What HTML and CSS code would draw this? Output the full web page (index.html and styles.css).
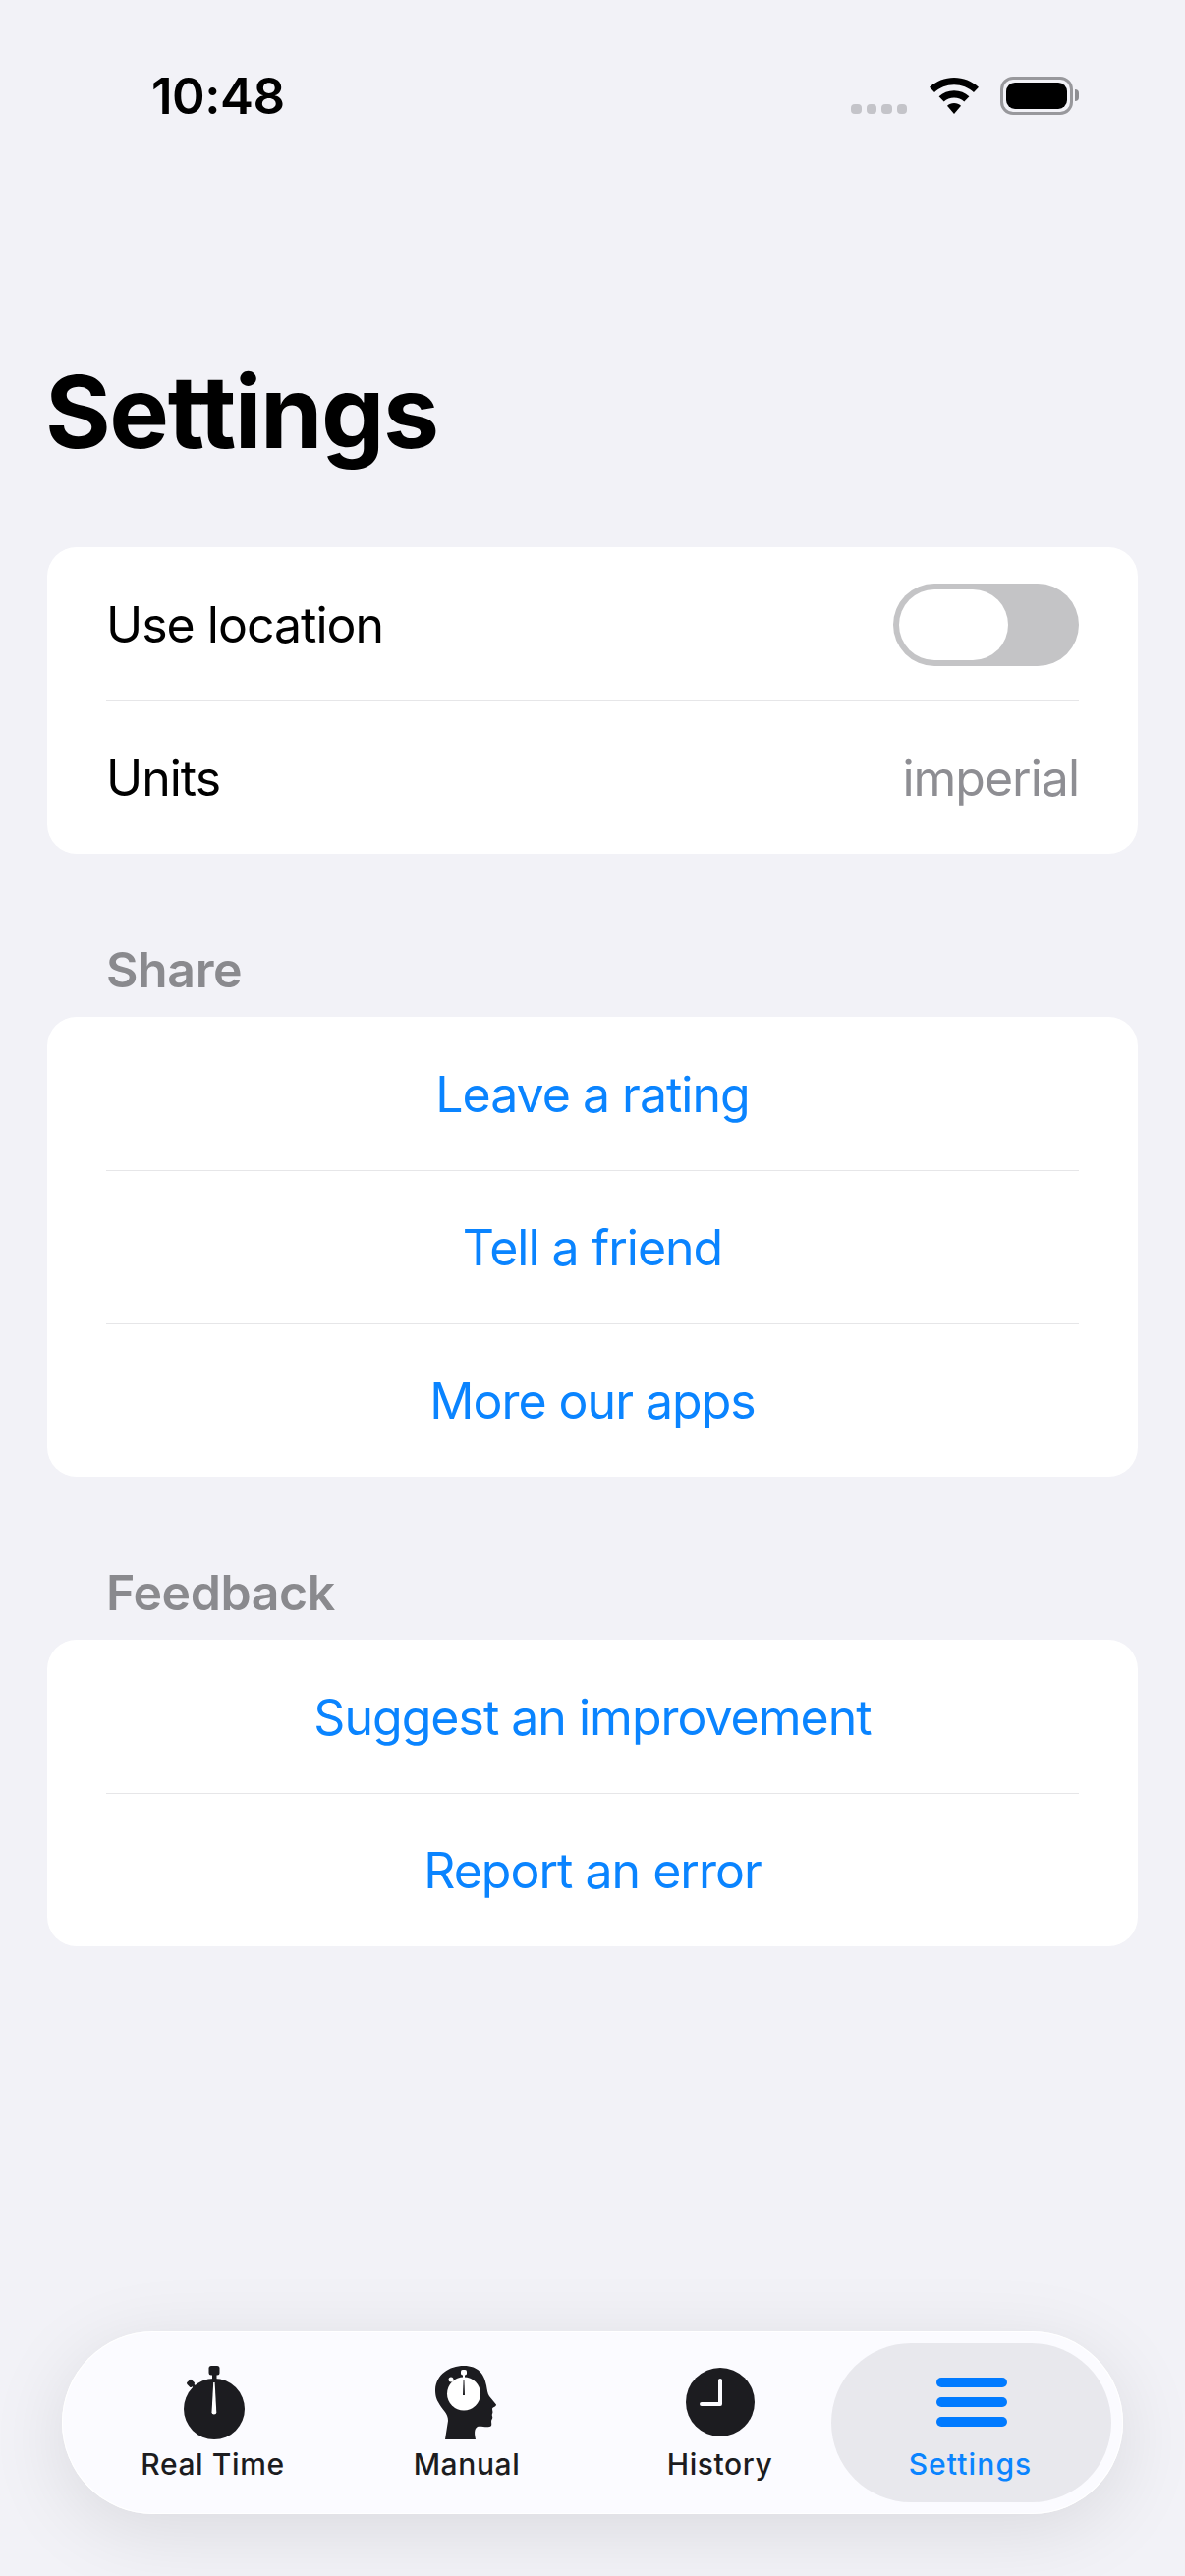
FILE: index.html
```html
<!DOCTYPE html>
<html lang="en">
<head>
<meta charset="utf-8">
<title>Settings</title>
<link rel="stylesheet" href="styles.css">
</head>
<body>
<div class="screen">
  <header class="status">
    <span class="time">10:48</span>
    <div class="status-icons">
      <div class="dots"><i></i><i></i><i></i><i></i></div>
      <svg class="wifi" width="50" height="37" viewBox="0 0 50 37"><path d="M25 0C34.500 0 43.200 3.600 50 9.800L45 15C39.700 10.100 32.700 7.200 25 7.200S10.300 10.100 5 15L0 9.800C6.800 3.600 15.500 0 25 0Z"/><path d="M25 13.200C30.900 13.200 36.300 15.400 40.400 19.200L35.300 24.400C32.600 21.900 29 20.400 25 20.400S17.400 21.900 14.700 24.400L9.600 19.200C13.700 15.400 19.100 13.200 25 13.200Z"/><path d="M25 26C27.700 26 30.200 27 32 28.800L25 37L18 28.800C19.800 27 22.300 26 25 26Z"/></svg>
      <div class="battery"><div class="battery-fill"></div></div>
    </div>
  </header>

  <h1 class="title">Settings</h1>

  <section class="card">
    <div class="row">
      <span>Use location</span>
      <span class="toggle"><span class="knob"></span></span>
    </div>
    <div class="row">
      <span>Units</span>
      <span class="value">imperial</span>
    </div>
  </section>

  <h2 class="section-label">Share</h2>
  <section class="card">
    <div class="row link">Leave a rating</div>
    <div class="row link">Tell a friend</div>
    <div class="row link">More our apps</div>
  </section>

  <h2 class="section-label">Feedback</h2>
  <section class="card">
    <div class="row link">Suggest an improvement</div>
    <div class="row link">Report an error</div>
  </section>

  <nav class="tabbar">
    <div class="tab tab-realtime">
      <svg class="tab-icon" width="66" height="75" viewBox="0 0 66 75">
        <rect x="28.500" y="0" width="11" height="9.500" rx="2.500" fill="#1c1c20"/>
        <rect x="32" y="9" width="4.500" height="6" fill="#1c1c20"/>
        <rect x="6.700" y="14.700" width="6.500" height="6.500" rx="1.500" transform="rotate(45 10 18)" fill="#1c1c20"/>
        <path d="M10 18L16 23" stroke="#1c1c20" stroke-width="3"/>
        <circle cx="34" cy="44" r="31" fill="#1c1c20"/>
        <path d="M33.200 17H34.600L36.300 47.500Q36.300 49.500 33.900 49.500T31.500 47.500Z" fill="#fff"/>
      </svg>
      <span class="tab-label">Real Time</span>
    </div>
    <div class="tab tab-manual">
      <svg class="tab-icon" width="64" height="75" viewBox="0 0 64 75">
        <path d="M29 0C44 0 50 9 52 20C53 25 53 28 55 31L62 39.500C62 42 58 42 58 44C58 46 59 47 58 49C57 50 59 52 58 54C56 56 58 59 57 61C54 64 47 61 43 62C39 64 40 70 41 75H10L13 56C13 48 7 45 3 37C0 32 0 27 0 24C1 9 14 0 29 0Z" fill="#1c1c20"/>
        <circle cx="29" cy="28.500" r="17" fill="#fff"/>
        <rect x="26" y="4" width="6" height="5.500" rx="1.800" fill="#fff"/>
        <rect x="28" y="9" width="2" height="4" fill="#fff"/>
        <circle cx="16" cy="14" r="2.500" fill="#fff"/>
        <path d="M28.600 14H29.400L30 30H28Z" fill="#1c1c20"/>
      </svg>
      <span class="tab-label">Manual</span>
    </div>
    <div class="tab tab-history">
      <svg class="tab-icon" width="70" height="75" viewBox="0 0 70 75">
        <circle cx="35" cy="37" r="35" fill="#1c1c20"/>
        <path d="M35 15V39H16" stroke="#fbfbff" stroke-width="4" stroke-linecap="round" stroke-linejoin="round" fill="none"/>
      </svg>
      <span class="tab-label">History</span>
    </div>
    <div class="tab tab-active">
      <div class="menu-icon"><i></i><i></i><i></i></div>
      <span class="tab-label">Settings</span>
    </div>
  </nav>
</div>
</body>
</html>
```
FILE: styles.css
```css
* { box-sizing: border-box; }
html, body { margin: 0; padding: 0; }
body {
  width: 1206px;
  height: 2622px;
  background: #f2f2f7;
  font-family: Inter, "Liberation Sans", sans-serif;
  color: #000;
  overflow: hidden;
}
.screen { position: relative; width: 1206px; height: 2622px; padding: 0 48px; }

.status {
  height: 198px;
  margin: 0 -48px;
  padding: 0 114px 0 154px;
  display: flex;
  justify-content: space-between;
  align-items: flex-start;
}
.time {
  margin-top: 70px;
  font-size: 51px;
  line-height: 56px;
  font-weight: 600;
  letter-spacing: -.5px;
}
.status-icons { margin-top: 78px; display: flex; align-items: flex-end; height: 39px; }
.dots { display: flex; gap: 5px; margin-bottom: 1px; margin-right: 23px; }
.dots i { width: 10.500px; height: 10.500px; border-radius: 4px; background: #c4c4c9; }
.wifi { fill: #000; margin-right: 22px; margin-bottom: 1px; }
.battery {
  position: relative;
  width: 74px;
  height: 39px;
  padding: 3px;
  border: 3px solid #98989c;
  border-radius: 13px;
}
.battery::after {
  content: "";
  position: absolute;
  right: -9px;
  top: 10px;
  width: 4px;
  height: 12px;
  border-radius: 0 5px 5px 0;
  background: #8e8e92;
}
.battery-fill { height: 100%; border-radius: 9px; background: #000; }

.title {
  margin: 159px 0 76px -2px;
  font-size: 102px;
  line-height: 124px;
  font-weight: 700;
  letter-spacing: -1.450px;
}

.card {
  background: #fff;
  border-radius: 30px;
  padding: 0 60px;
}
.row {
  height: 156px;
  padding-top: 1px;
  display: flex;
  align-items: center;
  justify-content: space-between;
  font-size: 50px;
  letter-spacing: -1px;
  border-top: 1px solid #e6e6e8;
}
.row:first-child { border-top: 0; padding-top: 2px; }
.value { color: #8e8e93; }
.link { justify-content: center; color: #0a84ff; }

.toggle {
  display: block;
  width: 189px;
  height: 84px;
  padding: 6px;
  border-radius: 42px;
  background: #c4c4c6;
}
.knob {
  display: block;
  width: 111px;
  height: 72px;
  border-radius: 36px;
  background: #fff;
}

.section-label {
  margin: 0;
  padding: 84px 0 14px 60px;
  font-size: 50px;
  line-height: 68px;
  font-weight: 600;
  letter-spacing: -.4px;
  color: #8a8a8e;
}

.tabbar {
  position: absolute;
  left: 63px;
  top: 2373px;
  width: 1080px;
  height: 186px;
  padding: 12px;
  display: flex;
  align-items: stretch;
  background: #fbfbff;
  border-radius: 93px;
  box-shadow: 0 16px 80px rgba(0,0,0,.1), inset 0 0 0 1px #fff;
}
.tab {
  display: flex;
  flex-direction: column;
  align-items: center;
  justify-content: flex-start;
  color: #1c1c20;
}
.tab-realtime { width: 256px; padding-left: 27px; }
.tab-manual { width: 288px; }
.tab-history { width: 227px; }
.tab-active {
  flex: 1;
  padding-right: 2px;
  border-radius: 81px;
  background: #e8e8ed;
  color: #0a84ff;
}
.tab-icon { margin-top: 23px; display: block; }
.tab-label {
  margin-top: 5px;
  font-size: 30px;
  line-height: 40px;
  font-weight: 450;
  letter-spacing: .6px;
}
.tab-active .tab-label { font-weight: 500; letter-spacing: 1.100px; }
.menu-icon {
  margin-top: 35px;
  margin-left: 2px;
  width: 72px;
  height: 50px;
  margin-bottom: 13px;
  display: flex;
  flex-direction: column;
  justify-content: space-between;
}
.menu-icon i { height: 10px; border-radius: 5px; background: #007aff; }
```
